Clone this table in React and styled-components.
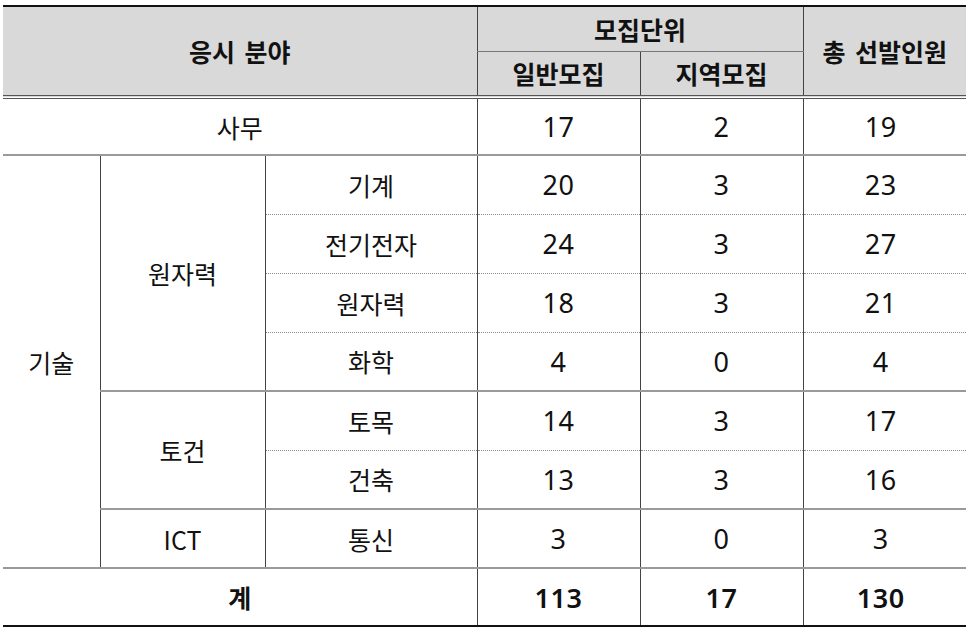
import React from 'react'
import styled, { createGlobalStyle } from 'styled-components'

const GlobalStyle = createGlobalStyle`
  body {
    margin: 0;
    background: #fff;
    font-family: "Noto Sans CJK KR", "Noto Sans", sans-serif;
    color: #111;
  }
`

const Page = styled.div`
  padding: 5px 0 0 3px;
`

const Table = styled.table`
  width: 963px;
  border-collapse: collapse;
  table-layout: fixed;
  font-size: 25px;
  border-top: 2px solid #111;
  border-bottom: 2px solid #111;
`

const HeadRow = styled.tr`
  height: ${ p => p.h }px;
`

const Th = styled.th`
  background: #d9d9d9;
  font-weight: 700;
  text-align: center;
  vertical-align: middle;
  padding: 0;
  word-spacing: 4px;
  border-left: ${ p => p.first ? 'none' : '1px solid #444' };
  border-top: ${ p => p.split ? '1px solid #777' : 'none' };
  border-bottom: 4px double #555;
`

const Row = styled.tr`
  height: ${ p => p.h || 59 }px;
`

const Td = styled.td`
  text-align: center;
  vertical-align: middle;
  padding: 0;
  font-weight: ${ p => p.bold ? 600 : 400 };
  border-left: ${ p => p.first ? 'none' : '1px solid #444' };
  border-top: ${ p => p.dotted ? '1px dotted #8a8a8a' : '2px solid #9a9a9a' };
`

const Num = styled(Td)`
  font-family: "Noto Sans", "Noto Sans CJK KR", sans-serif;
  font-size: 27px;
  letter-spacing: 0.5px;
  padding-right: ${ p => p.last ? 8 : 0 }px;
`

const data = [
  { group: '기술', sub: '원자력', subSpan: 4, name: '기계', v: [20, 3, 23], groupSpan: 7 },
  { name: '전기전자', v: [24, 3, 27], dotted: true },
  { name: '원자력', v: [18, 3, 21], dotted: true },
  { name: '화학', v: [4, 0, 4], dotted: true },
  { sub: '토건', subSpan: 2, name: '토목', v: [14, 3, 17] },
  { name: '건축', v: [13, 3, 16], dotted: true },
  { sub: 'ICT', subSpan: 1, name: '통신', v: [3, 0, 3] },
]

const App = () => (
  <Page>
    <GlobalStyle />
    <Table>
      <colgroup>
        <col style={ { width: 97 } } />
        <col style={ { width: 165 } } />
        <col style={ { width: 212 } } />
        <col style={ { width: 163 } } />
        <col style={ { width: 163 } } />
        <col style={ { width: 163 } } />
      </colgroup>
      <thead>
        <HeadRow h={ 45 }>
          <Th first rowSpan={ 2 } colSpan={ 3 }>응시 분야</Th>
          <Th colSpan={ 2 } style={ { borderBottom: '1px solid #777' } }>모집단위</Th>
          <Th rowSpan={ 2 }>총 선발인원</Th>
        </HeadRow>
        <HeadRow h={ 46 }>
          <Th split>일반모집</Th>
          <Th split>지역모집</Th>
        </HeadRow>
      </thead>
      <tbody>
        <Row h={ 58 }>
          <Td first colSpan={ 3 }>사무</Td>
          <Num>17</Num>
          <Num>2</Num>
          <Num last>19</Num>
        </Row>
        { data.map(r => (
          <Row key={ r.name + r.v.join() }>
            { r.group && <Td first rowSpan={ r.groupSpan }>{ r.group }</Td> }
            { r.sub && <Td rowSpan={ r.subSpan }>{ r.sub }</Td> }
            <Td dotted={ r.dotted }>{ r.name }</Td>
            { r.v.map((n, i) => <Num key={ i } last={ i === 2 } dotted={ r.dotted }>{ n }</Num>) }
          </Row>
        )) }
        <Row h={ 58 }>
          <Td first bold colSpan={ 3 }>계</Td>
          <Num bold>113</Num>
          <Num bold>17</Num>
          <Num bold last>130</Num>
        </Row>
      </tbody>
    </Table>
  </Page>
)

export default App
